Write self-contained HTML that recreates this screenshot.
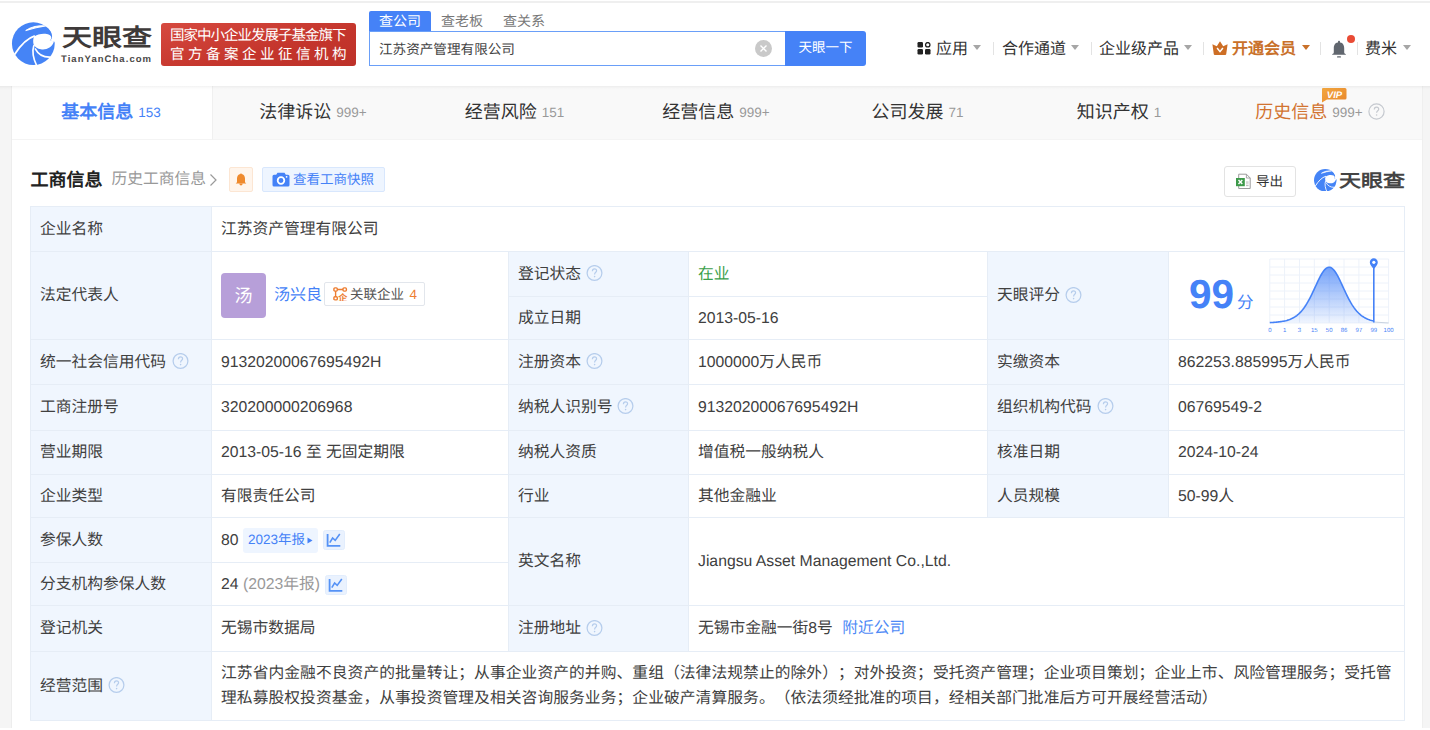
<!DOCTYPE html>
<html lang="zh-CN"><head><meta charset="utf-8">
<style>
*{margin:0;padding:0;box-sizing:border-box}
html,body{width:1430px;height:730px;overflow:hidden;background:#f5f5f5;font-family:"Liberation Sans",sans-serif;color:#333;text-rendering:geometricPrecision;text-spacing-trim:space-all}
.a{position:absolute}
.nw{white-space:nowrap}
#hdr{position:absolute;left:0;top:0;width:1430px;height:86px;background:#fff}
#hshadow{position:absolute;left:0;top:86px;width:1430px;height:4px;background:linear-gradient(180deg,rgba(0,0,0,.05),rgba(0,0,0,.015) 50%,rgba(0,0,0,0))}
#topline{position:absolute;left:0;top:1px;width:1430px;height:2px;background:#efefef}
#card{position:absolute;left:11px;top:86px;width:1412px;height:650px;background:#fff;border-left:1px solid #ededed;border-right:1px solid #efefef}
.tab{position:absolute;top:86px;height:54px;background:#f9f9f9;border-bottom:1px solid #f4f4f4;text-align:center;padding-right:2px;font-size:18px;line-height:52px;color:#333;white-space:nowrap}
.tab .n{font-size:13.5px;color:#999;margin-left:5px;position:relative;top:-1px}
.cell{position:absolute;font-size:15.75px;line-height:20px;display:flex;align-items:center;padding-left:9px;white-space:nowrap;color:#404040}
.cell>span{position:relative;top:0.5px}
.lab{background:#f0f6fe}
.hl{position:absolute;height:1px;background:#e6edf6}
.vl{position:absolute;width:1px;background:#e6edf6}
.nav{position:absolute;top:40px;font-size:16px;line-height:20px;color:#333;white-space:nowrap}
.caret{position:absolute;width:0;height:0;border-left:4px solid transparent;border-right:4px solid transparent;border-top:5px solid #a6a6a6}
.sep{position:absolute;top:42px;width:1px;height:13px;background:#e3e3e3}
</style></head><body>
<div id="hdr"><div id="topline"></div>
<svg class="a" style="left:8px;top:18px" width="50" height="50" viewBox="0 0 730 730"><circle cx="370" cy="375" r="312" fill="#4584f6"/>
<path d="M380,275 C430,232 540,212 600,245 C640,265 645,305 610,328 L700,348 C668,352 668,352 668,352 C640,432 560,472 480,458 C430,448 398,422 378,402 C362,355 365,305 380,275 Z" fill="#fff"/>
<path d="M560,118 C622,168 652,240 642,288 C637,310 622,322 606,328 L720,350 L720,90 Z" fill="#fff"/>
<path d="M96,534 C180,400 270,300 392,262" stroke="#fff" stroke-width="26" fill="none"/>
<path d="M420,700 C372,600 348,490 378,398" stroke="#fff" stroke-width="24" fill="none"/>
<path d="M394,442 C440,530 520,575 620,570" stroke="#fff" stroke-width="24" fill="none"/>
<path d="M262,184 C330,128 450,104 548,116 C450,126 350,152 262,184 Z" fill="#fff" stroke="#fff" stroke-width="16" stroke-linejoin="round"/></svg>
<div class="a nw" style="left:62px;top:18px;font-size:30px;line-height:36px;font-weight:bold;color:#3e3a39;transform:scaleY(0.81);transform-origin:0 30px">天眼查</div>
<div class="a nw" style="left:61px;top:53.5px;font-size:9.5px;line-height:12px;font-weight:bold;color:#4a4746;letter-spacing:1.05px">TianYanCha.com</div>
<div class="a" style="left:161px;top:23px;width:195px;height:43px;border-radius:3px;background:linear-gradient(165deg,#d6493f,#c4352c 60%,#bd3129)"></div>
<div class="a nw" style="left:170px;top:27.5px;font-size:14.5px;line-height:17px;color:#fff;letter-spacing:-1px">国家中小企业发展子基金旗下</div>
<div class="a nw" style="left:170px;top:47px;font-size:14.5px;line-height:17px;color:#fff;letter-spacing:3.5px">官方备案企业征信机构</div>
<div class="a" style="left:369px;top:11px;width:62px;height:21px;background:#4582f7;border-radius:2px 2px 0 0"></div>
<div class="a nw" style="left:379px;top:11px;font-size:14px;line-height:20px;color:#fff">查公司</div>
<div class="a nw" style="left:441px;top:11px;font-size:14px;line-height:20px;color:#777">查老板</div>
<div class="a nw" style="left:503px;top:11px;font-size:14px;line-height:20px;color:#777">查关系</div>
<div class="a" style="left:369px;top:31px;width:420px;height:35px;border:1px solid #6a9ff8;border-right:none;background:#fff"></div>
<div class="a nw" style="left:379px;top:40px;font-size:13.6px;line-height:20px;color:#444">江苏资产管理有限公司</div>
<div class="a" style="left:755px;top:40px;width:17px;height:17px;border-radius:50%;background:#c9c9c9"></div>
<svg class="a" style="left:755px;top:40px" width="17" height="17" viewBox="0 0 17 17"><path d="M5.5,5.5 L11.5,11.5 M11.5,5.5 L5.5,11.5" stroke="#fff" stroke-width="1.4"/></svg>
<div class="a" style="left:785px;top:31px;width:81px;height:35px;background:#4582f7;border-radius:0 3px 3px 0"></div>
<div class="a nw" style="left:785px;top:38px;width:81px;text-align:center;font-size:13.5px;line-height:20px;color:#fff">天眼一下</div>
<svg class="a" style="left:917px;top:42px" width="14" height="13" viewBox="0 0 14 13"><rect x="0.5" y="0" width="5.5" height="5.5" rx="1.2" fill="#222"/><rect x="0.5" y="7" width="5.5" height="5.5" rx="1.2" fill="#222"/><rect x="8" y="7" width="5.5" height="5.5" rx="1.2" fill="#222"/><circle cx="10.75" cy="2.75" r="2.2" fill="none" stroke="#222" stroke-width="1.3"/></svg>
<div class="nav" style="left:936px">应用</div>
<div class="caret" style="left:973px;top:45px"></div>
<div class="sep" style="left:993px"></div>
<div class="nav" style="left:1002px">合作通道</div>
<div class="caret" style="left:1071px;top:45px"></div>
<div class="sep" style="left:1091px"></div>
<div class="nav" style="left:1099px">企业级产品</div>
<div class="caret" style="left:1184px;top:45px"></div>
<div class="sep" style="left:1203px"></div>
<svg class="a" style="left:1212px;top:40.5px" width="16" height="15" viewBox="0 0 16 15"><path d="M0.4,3.3 L4.8,5.3 L8,0.3 L11.2,5.3 L15.6,3.3 L14.2,13.2 Q14,14 13.2,14 L2.8,14 Q2,14 1.8,13.2 Z" fill="#cd6e25"/><path d="M5.1,7 L8,10.6 L10.9,7" stroke="#fff" stroke-width="1.5" fill="none"/></svg>
<div class="nav" style="left:1232px;color:#c9712a;font-weight:bold">开通会员</div>
<div class="caret" style="left:1302px;top:45px;border-top-color:#c9712a"></div>
<div class="sep" style="left:1320px"></div>
<svg class="a" style="left:1331px;top:40px" width="16" height="19" viewBox="0 0 16 19"><rect x="7" y="0.8" width="2" height="2.5" rx="0.8" fill="#60666e"/><path d="M8,2.2 C4.3,2.2 2.8,5 2.8,8.2 L2.8,12.4 Q2.8,13.6 1.4,14 L1,14.8 L15,14.8 L14.6,14 Q13.2,13.6 13.2,12.4 L13.2,8.2 C13.2,5 11.7,2.2 8,2.2 Z" fill="#60666e"/><rect x="6" y="16.3" width="4" height="1.3" rx="0.6" fill="#60666e"/></svg>
<div class="a" style="left:1347px;top:35px;width:8px;height:8px;border-radius:50%;background:#e94b35"></div>
<div class="sep" style="left:1357px"></div>
<div class="nav" style="left:1365px">费米</div>
<div class="caret" style="left:1403px;top:45px"></div>
</div>
<div id="card"></div>
<div class="tab" style="left:12px;width:201px;background:#fff;border-right:1px solid #f0f0f0"><b style="color:#4582f7">基本信息</b><span class="n" style="color:#4582f7">153</span></div>
<div class="tab" style="left:213px;width:202px">法律诉讼<span class="n">999+</span></div>
<div class="tab" style="left:415px;width:201px">经营风险<span class="n">151</span></div>
<div class="tab" style="left:616px;width:202px">经营信息<span class="n">999+</span></div>
<div class="tab" style="left:818px;width:201px">公司发展<span class="n">71</span></div>
<div class="tab" style="left:1019px;width:202px">知识产权<span class="n">1</span></div>
<div class="tab" style="left:1221px;width:201px;padding-right:3px"><span style="color:#d27330">历史信息</span><span class="n">999+</span><svg style="display:inline-block;vertical-align:-2px;margin-left:5px" width="17" height="17" viewBox="0 0 17 17"><circle cx="8.5" cy="8.5" r="7.6" fill="none" stroke="#c5c9cf" stroke-width="1.2"/><path d="M6.3,6.6 C6.3,4.9 7.3,4.2 8.5,4.2 C9.8,4.2 10.7,5 10.7,6.2 C10.7,7.6 8.6,7.9 8.6,9.7" fill="none" stroke="#c5c9cf" stroke-width="1.2"/><circle cx="8.6" cy="12" r="0.8" fill="#c5c9cf"/></svg></div>
<svg class="a" style="left:1321px;top:87px" width="26" height="16" viewBox="0 0 26 16"><defs><linearGradient id="vg" x1="0" y1="0" x2="1" y2="1"><stop offset="0" stop-color="#f3a73f"/><stop offset="1" stop-color="#e8862b"/></linearGradient></defs><path d="M2,1 L24,1 Q25.5,1 25.5,2.5 L25.5,11 Q25.5,12.5 24,12.5 L6,12.5 L1,15.5 L1,2 Q1,1 2,1 Z" fill="url(#vg)"/><text x="13.5" y="10.5" text-anchor="middle" font-family="Liberation Sans" font-weight="bold" font-style="italic" font-size="9.5" fill="#fff">VIP</text></svg>
<div class="a nw" style="left:30.5px;top:167px;font-size:18px;line-height:26px;font-weight:bold;color:#222">工商信息</div>
<div class="a nw" style="left:111.5px;top:170px;font-size:15.75px;line-height:20px;color:#999">历史工商信息</div>
<svg class="a" style="left:208px;top:173px" width="10" height="14" viewBox="0 0 10 14"><path d="M2.5,1.5 L8,7 L2.5,12.5" fill="none" stroke="#9a9a9a" stroke-width="1.2"/></svg>
<div class="a" style="left:229px;top:167px;width:24px;height:25px;background:#fff5ec;border:1px solid #fce6d3;border-radius:2px"></div>
<svg class="a" style="left:235px;top:173px" width="12" height="13" viewBox="0 0 12 13"><path d="M6,0 L6.6,0.9 C8.8,1.4 10,3 10,5.5 L10,9.2 L11.3,10.5 L0.7,10.5 L2,9.2 L2,5.5 C2,3 3.2,1.4 5.4,0.9 Z" fill="#ef8a2d"/><path d="M4.3,10.5 Q4.5,12.6 6,12.6 Q7.5,12.6 7.7,10.5 Z" fill="#ef8a2d"/></svg>
<div class="a" style="left:262px;top:167px;width:123px;height:25px;background:#eef5ff;border:1px solid #d8e7fd;border-radius:2px"></div>
<svg class="a" style="left:272px;top:172px" width="18" height="15" viewBox="0 0 18 15"><path d="M5.5,0.8 L12.5,0.8 L13.8,2.8 L16,2.8 Q17.5,2.8 17.5,4.3 L17.5,13 Q17.5,14.5 16,14.5 L2,14.5 Q0.5,14.5 0.5,13 L0.5,4.3 Q0.5,2.8 2,2.8 L4.2,2.8 Z" fill="#4582f7"/><circle cx="9" cy="8.5" r="3.3" fill="none" stroke="#fff" stroke-width="1.8"/><circle cx="14.6" cy="4.8" r="0.9" fill="#fff"/></svg>
<div class="a nw" style="left:293px;top:170px;font-size:13.5px;line-height:20px;color:#4582f7">查看工商快照</div>
<div class="a" style="left:1224px;top:166px;width:72px;height:31px;background:#fff;border:1px solid #e3e3e3;border-radius:3px"></div>
<svg class="a" style="left:1235px;top:173px" width="17" height="17" viewBox="0 0 17 17"><path d="M3.7,1.2 L11.4,1.2 L15.2,5 L15.2,15.5 L3.7,15.5 Z" fill="#fff" stroke="#9c9c9c" stroke-width="1"/><path d="M11.4,1.2 L11.4,5 L15.2,5" fill="none" stroke="#9c9c9c" stroke-width="0.9"/><rect x="11" y="8.6" width="2.6" height="0.9" fill="#b0b0b0"/><rect x="11" y="10.4" width="2.6" height="0.9" fill="#c4c4c4"/><rect x="11" y="12.2" width="2.6" height="0.9" fill="#b0b0b0"/><rect x="1" y="5" width="8.8" height="8.2" fill="#3d9a4a"/><path d="M3.5,7.1 L7.3,11.1 M7.3,7.1 L3.5,11.1" stroke="#fff" stroke-width="1.4"/></svg>
<div class="a nw" style="left:1256px;top:172px;font-size:13.5px;line-height:20px;color:#333">导出</div>
<svg class="a" style="left:1314px;top:168.5px" width="22.5" height="22.5" viewBox="58 63 624 624"><circle cx="370" cy="375" r="312" fill="#4584f6"/>
<path d="M380,275 C430,232 540,212 600,245 C640,265 645,305 610,328 L700,348 C668,352 668,352 668,352 C640,432 560,472 480,458 C430,448 398,422 378,402 C362,355 365,305 380,275 Z" fill="#fff"/>
<path d="M560,118 C622,168 652,240 642,288 C637,310 622,322 606,328 L720,350 L720,90 Z" fill="#fff"/>
<path d="M96,534 C180,400 270,300 392,262" stroke="#fff" stroke-width="26" fill="none"/>
<path d="M420,700 C372,600 348,490 378,398" stroke="#fff" stroke-width="24" fill="none"/>
<path d="M394,442 C440,530 520,575 620,570" stroke="#fff" stroke-width="24" fill="none"/>
<path d="M262,184 C330,128 450,104 548,116 C450,126 350,152 262,184 Z" fill="#fff" stroke="#fff" stroke-width="16" stroke-linejoin="round"/></svg>
<div class="a nw" style="left:1339px;top:165px;font-size:22px;line-height:30px;font-weight:bold;color:#444;transform:scaleY(0.82);transform-origin:0 23.5px">天眼查</div>
<div class="a" style="left:30px;top:206px;width:1375px;height:515px;border:1px solid #e6edf6"></div>
<div class="cell lab" style="left:31px;top:207px;width:180px;height:44px;"><span>企业名称</span></div>
<div class="cell" style="left:212px;top:207px;width:1192px;height:44px;"><span>江苏资产管理有限公司</span></div>
<div class="cell lab" style="left:31px;top:252px;width:180px;height:87px;"><span>法定代表人</span></div>
<div class="cell" style="left:212px;top:252px;width:296px;height:87px;"><span></span></div>
<div class="cell lab" style="left:509px;top:252px;width:179px;height:44px;"><span>登记状态</span></div>
<div class="cell lab" style="left:509px;top:297px;width:179px;height:42px;"><span>成立日期</span></div>
<div class="cell" style="left:689px;top:252px;width:298px;height:44px;"><span><span style="color:#3aa04a">在业</span></span></div>
<div class="cell" style="left:689px;top:297px;width:298px;height:42px;"><span>2013-05-16</span></div>
<div class="cell lab" style="left:988px;top:252px;width:180px;height:87px;"><span>天眼评分</span></div>
<div class="cell" style="left:1169px;top:252px;width:235px;height:87px;"><span></span></div>
<div class="cell lab" style="left:31px;top:340px;width:180px;height:44px;"><span>统一社会信用代码</span></div>
<div class="cell" style="left:212px;top:340px;width:296px;height:44px;"><span>91320200067695492H</span></div>
<div class="cell lab" style="left:509px;top:340px;width:179px;height:44px;"><span>注册资本</span></div>
<div class="cell" style="left:689px;top:340px;width:298px;height:44px;"><span>1000000万人民币</span></div>
<div class="cell lab" style="left:988px;top:340px;width:180px;height:44px;"><span>实缴资本</span></div>
<div class="cell" style="left:1169px;top:340px;width:235px;height:44px;"><span>862253.885995万人民币</span></div>
<div class="cell lab" style="left:31px;top:385px;width:180px;height:45px;"><span>工商注册号</span></div>
<div class="cell" style="left:212px;top:385px;width:296px;height:45px;"><span>320200000206968</span></div>
<div class="cell lab" style="left:509px;top:385px;width:179px;height:45px;"><span>纳税人识别号</span></div>
<div class="cell" style="left:689px;top:385px;width:298px;height:45px;"><span>91320200067695492H</span></div>
<div class="cell lab" style="left:988px;top:385px;width:180px;height:45px;"><span>组织机构代码</span></div>
<div class="cell" style="left:1169px;top:385px;width:235px;height:45px;"><span>06769549-2</span></div>
<div class="cell lab" style="left:31px;top:431px;width:180px;height:43px;"><span>营业期限</span></div>
<div class="cell" style="left:212px;top:431px;width:296px;height:43px;"><span>2013-05-16 至 无固定期限</span></div>
<div class="cell lab" style="left:509px;top:431px;width:179px;height:43px;"><span>纳税人资质</span></div>
<div class="cell" style="left:689px;top:431px;width:298px;height:43px;"><span>增值税一般纳税人</span></div>
<div class="cell lab" style="left:988px;top:431px;width:180px;height:43px;"><span>核准日期</span></div>
<div class="cell" style="left:1169px;top:431px;width:235px;height:43px;"><span>2024-10-24</span></div>
<div class="cell lab" style="left:31px;top:475px;width:180px;height:42px;"><span>企业类型</span></div>
<div class="cell" style="left:212px;top:475px;width:296px;height:42px;"><span>有限责任公司</span></div>
<div class="cell lab" style="left:509px;top:475px;width:179px;height:42px;"><span>行业</span></div>
<div class="cell" style="left:689px;top:475px;width:298px;height:42px;"><span>其他金融业</span></div>
<div class="cell lab" style="left:988px;top:475px;width:180px;height:42px;"><span>人员规模</span></div>
<div class="cell" style="left:1169px;top:475px;width:235px;height:42px;"><span>50-99人</span></div>
<div class="cell lab" style="left:31px;top:518px;width:180px;height:44px;"><span>参保人数</span></div>
<div class="cell" style="left:212px;top:518px;width:296px;height:44px;"><span>80</span></div>
<div class="cell lab" style="left:31px;top:563px;width:180px;height:42px;"><span>分支机构参保人数</span></div>
<div class="cell" style="left:212px;top:563px;width:296px;height:42px;"><span>24 <span style="color:#999">(2023年报)</span></span></div>
<div class="cell lab" style="left:509px;top:518px;width:179px;height:87px;"><span>英文名称</span></div>
<div class="cell" style="left:689px;top:518px;width:715px;height:87px;"><span>Jiangsu Asset Management Co.,Ltd.</span></div>
<div class="cell lab" style="left:31px;top:606px;width:180px;height:45px;"><span>登记机关</span></div>
<div class="cell" style="left:212px;top:606px;width:296px;height:45px;"><span>无锡市数据局</span></div>
<div class="cell lab" style="left:509px;top:606px;width:179px;height:45px;"><span>注册地址</span></div>
<div class="cell" style="left:689px;top:606px;width:715px;height:45px;"><span>无锡市金融一街8号<span style="color:#4f8af6;margin-left:9.5px">附近公司</span></span></div>
<div class="cell lab" style="left:31px;top:652px;width:180px;height:68px;"><span>经营范围</span></div>
<div class="cell" style="left:212px;top:652px;width:1192px;height:68px;"><span><div style="white-space:nowrap;line-height:25.5px;margin-top:-1px;letter-spacing:0.07px">江苏省内金融不良资产的批量转让；从事企业资产的并购、重组（法律法规禁止的除外）；对外投资；受托资产管理；企业项目策划；企业上市、风险管理服务；受托管<br>理私募股权投资基金，从事投资管理及相关咨询服务业务；企业破产清算服务。（依法须经批准的项目，经相关部门批准后方可开展经营活动）</div></span></div>
<div class="hl" style="left:30px;top:251px;width:1375px"></div>
<div class="hl" style="left:30px;top:339px;width:1375px"></div>
<div class="hl" style="left:30px;top:384px;width:1375px"></div>
<div class="hl" style="left:30px;top:430px;width:1375px"></div>
<div class="hl" style="left:30px;top:474px;width:1375px"></div>
<div class="hl" style="left:30px;top:517px;width:1375px"></div>
<div class="hl" style="left:30px;top:562px;width:479px"></div>
<div class="hl" style="left:30px;top:605px;width:1375px"></div>
<div class="hl" style="left:30px;top:651px;width:1375px"></div>
<div class="hl" style="left:508px;top:296px;width:480px"></div>
<div class="vl" style="left:211px;top:206px;height:515px"></div>
<div class="vl" style="left:508px;top:251px;height:401px"></div>
<div class="vl" style="left:688px;top:251px;height:401px"></div>
<div class="vl" style="left:987px;top:251px;height:267px"></div>
<div class="vl" style="left:1168px;top:251px;height:267px"></div>
<svg class="a" style="left:172px;top:353px" width="17" height="17" viewBox="0 0 17 17"><circle cx="8.5" cy="8" r="7.4" fill="none" stroke="#b6cdec" stroke-width="1.25"/><path d="M6.4,6.3 C6.4,4.6 7.4,3.9 8.5,3.9 C9.8,3.9 10.6,4.7 10.6,5.8 C10.6,7.2 8.6,7.5 8.6,9.4" fill="none" stroke="#b6cdec" stroke-width="1.2"/><circle cx="8.6" cy="11.6" r="0.8" fill="#b6cdec"/></svg>
<svg class="a" style="left:586px;top:265px" width="17" height="17" viewBox="0 0 17 17"><circle cx="8.5" cy="8" r="7.4" fill="none" stroke="#b6cdec" stroke-width="1.25"/><path d="M6.4,6.3 C6.4,4.6 7.4,3.9 8.5,3.9 C9.8,3.9 10.6,4.7 10.6,5.8 C10.6,7.2 8.6,7.5 8.6,9.4" fill="none" stroke="#b6cdec" stroke-width="1.2"/><circle cx="8.6" cy="11.6" r="0.8" fill="#b6cdec"/></svg>
<svg class="a" style="left:586px;top:353px" width="17" height="17" viewBox="0 0 17 17"><circle cx="8.5" cy="8" r="7.4" fill="none" stroke="#b6cdec" stroke-width="1.25"/><path d="M6.4,6.3 C6.4,4.6 7.4,3.9 8.5,3.9 C9.8,3.9 10.6,4.7 10.6,5.8 C10.6,7.2 8.6,7.5 8.6,9.4" fill="none" stroke="#b6cdec" stroke-width="1.2"/><circle cx="8.6" cy="11.6" r="0.8" fill="#b6cdec"/></svg>
<svg class="a" style="left:617px;top:398px" width="17" height="17" viewBox="0 0 17 17"><circle cx="8.5" cy="8" r="7.4" fill="none" stroke="#b6cdec" stroke-width="1.25"/><path d="M6.4,6.3 C6.4,4.6 7.4,3.9 8.5,3.9 C9.8,3.9 10.6,4.7 10.6,5.8 C10.6,7.2 8.6,7.5 8.6,9.4" fill="none" stroke="#b6cdec" stroke-width="1.2"/><circle cx="8.6" cy="11.6" r="0.8" fill="#b6cdec"/></svg>
<svg class="a" style="left:1065px;top:287px" width="17" height="17" viewBox="0 0 17 17"><circle cx="8.5" cy="8" r="7.4" fill="none" stroke="#b6cdec" stroke-width="1.25"/><path d="M6.4,6.3 C6.4,4.6 7.4,3.9 8.5,3.9 C9.8,3.9 10.6,4.7 10.6,5.8 C10.6,7.2 8.6,7.5 8.6,9.4" fill="none" stroke="#b6cdec" stroke-width="1.2"/><circle cx="8.6" cy="11.6" r="0.8" fill="#b6cdec"/></svg>
<svg class="a" style="left:1097px;top:398px" width="17" height="17" viewBox="0 0 17 17"><circle cx="8.5" cy="8" r="7.4" fill="none" stroke="#b6cdec" stroke-width="1.25"/><path d="M6.4,6.3 C6.4,4.6 7.4,3.9 8.5,3.9 C9.8,3.9 10.6,4.7 10.6,5.8 C10.6,7.2 8.6,7.5 8.6,9.4" fill="none" stroke="#b6cdec" stroke-width="1.2"/><circle cx="8.6" cy="11.6" r="0.8" fill="#b6cdec"/></svg>
<svg class="a" style="left:586px;top:620px" width="17" height="17" viewBox="0 0 17 17"><circle cx="8.5" cy="8" r="7.4" fill="none" stroke="#b6cdec" stroke-width="1.25"/><path d="M6.4,6.3 C6.4,4.6 7.4,3.9 8.5,3.9 C9.8,3.9 10.6,4.7 10.6,5.8 C10.6,7.2 8.6,7.5 8.6,9.4" fill="none" stroke="#b6cdec" stroke-width="1.2"/><circle cx="8.6" cy="11.6" r="0.8" fill="#b6cdec"/></svg>
<svg class="a" style="left:108px;top:677px" width="17" height="17" viewBox="0 0 17 17"><circle cx="8.5" cy="8" r="7.4" fill="none" stroke="#b6cdec" stroke-width="1.25"/><path d="M6.4,6.3 C6.4,4.6 7.4,3.9 8.5,3.9 C9.8,3.9 10.6,4.7 10.6,5.8 C10.6,7.2 8.6,7.5 8.6,9.4" fill="none" stroke="#b6cdec" stroke-width="1.2"/><circle cx="8.6" cy="11.6" r="0.8" fill="#b6cdec"/></svg>
<div class="a" style="left:221px;top:273px;width:45px;height:45px;border-radius:4px;background:#b79fd9"></div>
<div class="a nw" style="left:221px;top:284px;width:45px;text-align:center;font-size:18px;line-height:24px;color:#fff">汤</div>
<div class="a nw" style="left:274px;top:285.5px;font-size:16px;line-height:20px;color:#4582f7">汤兴良</div>
<div class="a" style="left:324px;top:282px;width:101px;height:24px;border:1px solid #e2e6ec;border-radius:2px;background:#fff"></div>
<svg class="a" style="left:333px;top:287px" width="15" height="14" viewBox="0 0 15 14"><g fill="none" stroke="#ed7d31" stroke-width="1.4"><rect x="0.9" y="0.9" width="3.4" height="3.2" rx="1"/><rect x="10" y="0.9" width="3.4" height="3.2" rx="1"/><rect x="0.9" y="9.7" width="3.4" height="3.2" rx="1"/><path d="M4.3,2.5 L10,2.5 M2.6,4.1 L2.6,9.7"/></g><text x="9.8" y="13.6" text-anchor="middle" font-size="9" font-weight="bold" fill="#ed7d31">企</text></svg>
<div class="a nw" style="left:350px;top:285px;font-size:13.5px;line-height:20px;color:#555">关联企业</div>
<div class="a nw" style="left:409.5px;top:285px;font-size:13.5px;line-height:20px;color:#ed7d31">4</div>
<div class="a nw" style="left:1189px;top:270.5px;font-size:40.5px;line-height:46px;font-weight:bold;color:#4582f7">99</div>
<div class="a nw" style="left:1237px;top:293px;font-size:16.5px;line-height:20px;color:#4582f7">分</div>
<svg class="a" style="left:1265px;top:255px" width="130" height="80" viewBox="0 0 130 80">
<defs><linearGradient id="cg" x1="0" y1="0" x2="0" y2="1"><stop offset="0" stop-color="#4582f7" stop-opacity=".75"/><stop offset="1" stop-color="#4582f7" stop-opacity=".08"/></linearGradient></defs>
<path d="M4.8,4 L4.8,68" stroke="#edf2fa" stroke-width="1"/><path d="M19.6,4 L19.6,68" stroke="#edf2fa" stroke-width="1"/><path d="M34.5,4 L34.5,68" stroke="#edf2fa" stroke-width="1"/><path d="M49.3,4 L49.3,68" stroke="#edf2fa" stroke-width="1"/><path d="M64.2,4 L64.2,68" stroke="#edf2fa" stroke-width="1"/><path d="M79.0,4 L79.0,68" stroke="#edf2fa" stroke-width="1"/><path d="M93.9,4 L93.9,68" stroke="#edf2fa" stroke-width="1"/><path d="M108.8,4 L108.8,68" stroke="#edf2fa" stroke-width="1"/><path d="M123.6,4 L123.6,68" stroke="#edf2fa" stroke-width="1"/><path d="M4.8,4 L123.6,4" stroke="#edf2fa" stroke-width="1"/><path d="M4.8,12 L123.6,12" stroke="#edf2fa" stroke-width="1"/><path d="M4.8,20 L123.6,20" stroke="#edf2fa" stroke-width="1"/><path d="M4.8,28 L123.6,28" stroke="#edf2fa" stroke-width="1"/><path d="M4.8,36 L123.6,36" stroke="#edf2fa" stroke-width="1"/><path d="M4.8,44 L123.6,44" stroke="#edf2fa" stroke-width="1"/><path d="M4.8,52 L123.6,52" stroke="#edf2fa" stroke-width="1"/><path d="M4.8,60 L123.6,60" stroke="#edf2fa" stroke-width="1"/><path d="M4.8,68 L123.6,68" stroke="#edf2fa" stroke-width="1"/>
<path d="M4.8,67.59 L5.8,67.54 L6.8,67.49 L7.8,67.43 L8.8,67.37 L9.8,67.30 L10.8,67.22 L11.8,67.13 L12.8,67.03 L13.8,66.92 L14.8,66.80 L15.8,66.66 L16.8,66.50 L17.8,66.33 L18.8,66.14 L19.8,65.92 L20.8,65.69 L21.8,65.42 L22.8,65.12 L23.8,64.80 L24.8,64.43 L25.8,64.03 L26.8,63.58 L27.8,63.08 L28.8,62.53 L29.8,61.93 L30.8,61.26 L31.8,60.53 L32.8,59.73 L33.8,58.85 L34.8,57.90 L35.8,56.86 L36.8,55.73 L37.8,54.51 L38.8,53.19 L39.8,51.78 L40.8,50.27 L41.8,48.66 L42.8,46.96 L43.8,45.16 L44.8,43.28 L45.8,41.31 L46.8,39.28 L47.8,37.19 L48.8,35.05 L49.8,32.89 L50.8,30.71 L51.8,28.55 L52.8,26.42 L53.8,24.35 L54.8,22.37 L55.8,20.49 L56.8,18.75 L57.8,17.17 L58.8,15.78 L59.8,14.59 L60.8,13.62 L61.8,12.90 L62.8,12.42 L63.8,12.21 L64.8,12.26 L65.8,12.58 L66.8,13.16 L67.8,13.98 L68.8,15.04 L69.8,16.31 L70.8,17.78 L71.8,19.43 L72.8,21.23 L73.8,23.15 L74.8,25.17 L75.8,27.27 L76.8,29.41 L77.8,31.58 L78.8,33.75 L79.8,35.91 L80.8,38.03 L81.8,40.10 L82.8,42.11 L83.8,44.04 L84.8,45.89 L85.8,47.65 L86.8,49.31 L87.8,50.88 L88.8,52.35 L89.8,53.73 L90.8,55.01 L91.8,56.19 L92.8,57.28 L93.8,58.29 L94.8,59.21 L95.8,60.06 L96.8,60.83 L97.8,61.54 L98.8,62.18 L99.8,62.76 L100.8,63.29 L101.8,63.76 L102.8,64.19 L103.8,64.58 L104.8,64.93 L105.8,65.25 L106.8,65.53 L107.8,65.78 L108.8,66.01 L108.8,68 Z" fill="url(#cg)"/>
<path d="M4.8,67.59 L5.8,67.54 L6.8,67.49 L7.8,67.43 L8.8,67.37 L9.8,67.30 L10.8,67.22 L11.8,67.13 L12.8,67.03 L13.8,66.92 L14.8,66.80 L15.8,66.66 L16.8,66.50 L17.8,66.33 L18.8,66.14 L19.8,65.92 L20.8,65.69 L21.8,65.42 L22.8,65.12 L23.8,64.80 L24.8,64.43 L25.8,64.03 L26.8,63.58 L27.8,63.08 L28.8,62.53 L29.8,61.93 L30.8,61.26 L31.8,60.53 L32.8,59.73 L33.8,58.85 L34.8,57.90 L35.8,56.86 L36.8,55.73 L37.8,54.51 L38.8,53.19 L39.8,51.78 L40.8,50.27 L41.8,48.66 L42.8,46.96 L43.8,45.16 L44.8,43.28 L45.8,41.31 L46.8,39.28 L47.8,37.19 L48.8,35.05 L49.8,32.89 L50.8,30.71 L51.8,28.55 L52.8,26.42 L53.8,24.35 L54.8,22.37 L55.8,20.49 L56.8,18.75 L57.8,17.17 L58.8,15.78 L59.8,14.59 L60.8,13.62 L61.8,12.90 L62.8,12.42 L63.8,12.21 L64.8,12.26 L65.8,12.58 L66.8,13.16 L67.8,13.98 L68.8,15.04 L69.8,16.31 L70.8,17.78 L71.8,19.43 L72.8,21.23 L73.8,23.15 L74.8,25.17 L75.8,27.27 L76.8,29.41 L77.8,31.58 L78.8,33.75 L79.8,35.91 L80.8,38.03 L81.8,40.10 L82.8,42.11 L83.8,44.04 L84.8,45.89 L85.8,47.65 L86.8,49.31 L87.8,50.88 L88.8,52.35 L89.8,53.73 L90.8,55.01 L91.8,56.19 L92.8,57.28 L93.8,58.29 L94.8,59.21 L95.8,60.06 L96.8,60.83 L97.8,61.54 L98.8,62.18 L99.8,62.76 L100.8,63.29 L101.8,63.76 L102.8,64.19 L103.8,64.58 L104.8,64.93 L105.8,65.25 L106.8,65.53 L107.8,65.78 L108.8,66.01" stroke="#4582f7" stroke-width="1.6" fill="none"/>
<path d="M108.8,67 L123.6,68" stroke="#c9d3e0" stroke-width="1.2" fill="none"/>
<path d="M108.8,9 L108.8,67.5" stroke="#4582f7" stroke-width="1.6"/>
<path d="M108.8,14 C106.5,11.5 104.8,9.8 104.8,7.3 C104.8,5 106.6,3.3 108.8,3.3 C111,3.3 112.8,5 112.8,7.3 C112.8,9.8 111.1,11.5 108.8,14 Z" fill="#4582f7"/>
<circle cx="108.8" cy="7.3" r="1.6" fill="#fff"/>
<text x="4.8" y="77" text-anchor="middle" font-size="6" fill="#4582f7" font-family="Liberation Sans">0</text><text x="19.6" y="77" text-anchor="middle" font-size="6" fill="#4582f7" font-family="Liberation Sans">1</text><text x="34.5" y="77" text-anchor="middle" font-size="6" fill="#4582f7" font-family="Liberation Sans">3</text><text x="49.3" y="77" text-anchor="middle" font-size="6" fill="#4582f7" font-family="Liberation Sans">15</text><text x="64.2" y="77" text-anchor="middle" font-size="6" fill="#4582f7" font-family="Liberation Sans">50</text><text x="79.0" y="77" text-anchor="middle" font-size="6" fill="#4582f7" font-family="Liberation Sans">86</text><text x="93.9" y="77" text-anchor="middle" font-size="6" fill="#4582f7" font-family="Liberation Sans">97</text><text x="108.8" y="77" text-anchor="middle" font-size="6" fill="#4582f7" font-family="Liberation Sans">99</text><text x="123.6" y="77" text-anchor="middle" font-size="6" fill="#4582f7" font-family="Liberation Sans">100</text>
</svg>
<div class="a" style="left:243px;top:528px;width:75px;height:25px;border-radius:3px;background:#eef5ff"></div>
<div class="a nw" style="left:248px;top:530px;font-size:13.5px;line-height:20px;color:#4582f7">2023年报</div>
<svg class="a" style="left:307px;top:537px" width="6" height="7" viewBox="0 0 6 7"><path d="M0.5,0.5 L5.5,3.5 L0.5,6.5 Z" fill="#4582f7"/></svg>
<div class="a" style="left:323px;top:530px;width:22px;height:20px;border-radius:2.5px;background:#eaf2fe;border:1px solid #e2edfd"></div><svg class="a" style="left:323px;top:530px" width="22" height="20" viewBox="0 0 22 20"><path d="M4.6,4 L4.6,15.8 L17.3,15.8" fill="none" stroke="#5592f6" stroke-width="1.8"/><path d="M6.8,12.6 L9.6,8 L12.2,10.4 L16.8,4" fill="none" stroke="#5592f6" stroke-width="1.6"/></svg>
<div class="a" style="left:325px;top:575px;width:22px;height:20px;border-radius:2.5px;background:#eaf2fe;border:1px solid #e2edfd"></div><svg class="a" style="left:325px;top:575px" width="22" height="20" viewBox="0 0 22 20"><path d="M4.6,4 L4.6,15.8 L17.3,15.8" fill="none" stroke="#5592f6" stroke-width="1.8"/><path d="M6.8,12.6 L9.6,8 L12.2,10.4 L16.8,4" fill="none" stroke="#5592f6" stroke-width="1.6"/></svg>
<div id="hshadow"></div>
<div class="a" style="left:0;top:728px;width:1430px;height:2px;background:#fff"></div>
</body></html>
